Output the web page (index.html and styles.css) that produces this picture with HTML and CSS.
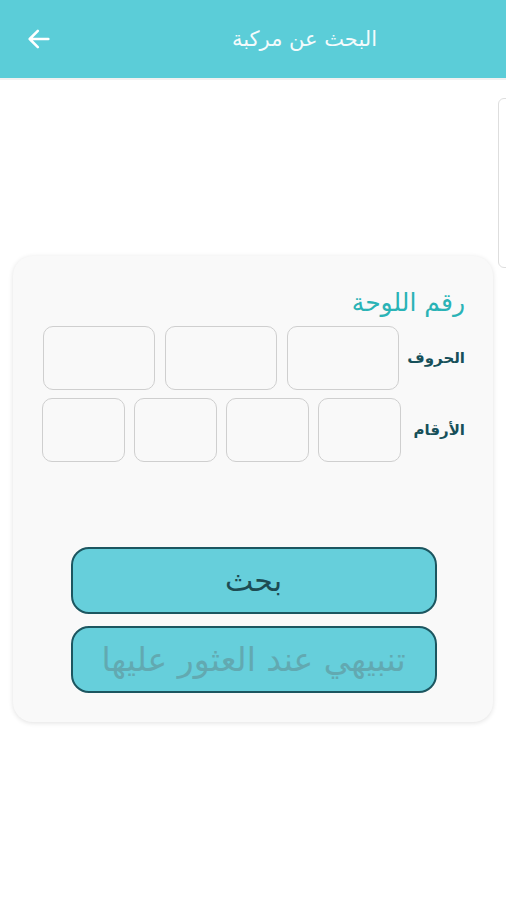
FILE: index.html
```html
<!DOCTYPE html>
<html lang="ar">
<head>
  <meta charset="utf-8" />
  <meta name="viewport" content="width=device-width, initial-scale=1.0">
  <title>البحث عن مركبة</title>
  <link rel="stylesheet" href="styles.css">
</head>
<body>
  <div class="toolbar">
    <button class="back-btn" aria-label="رجوع">
      <svg viewBox="0 0 24 24">
        <path d="M20 12H4M11 5l-7 7 7 7"/>
      </svg>
    </button>
    <div class="toolbar-title">البحث عن مركبة</div>
  </div>

  <div class="page">
    <div class="side-tab"></div>

    <div class="card">
      <div class="plate-title">رقم اللوحة</div>

      <div class="plate-row letters-row">
        <label class="row-label">الحروف</label>
        <div class="cells letters">
          <input class="cell" type="text" maxlength="1">
          <input class="cell" type="text" maxlength="1">
          <input class="cell" type="text" maxlength="1">
        </div>
      </div>

      <div class="plate-row numbers-row">
        <label class="row-label">الأرقام</label>
        <div class="cells numbers">
          <input class="cell" type="text" maxlength="1">
          <input class="cell" type="text" maxlength="1">
          <input class="cell" type="text" maxlength="1">
          <input class="cell" type="text" maxlength="1">
        </div>
      </div>

      <div class="actions">
        <button class="action-btn search-btn">بحث</button>
        <button class="action-btn notify-btn">تنبيهي عند العثور عليها</button>
      </div>
    </div>
  </div>
</body>
</html>
```

FILE: styles.css
```css
:root {
  --primary: #5bcdd8;
  --button: #66cfdb;
  --button-border: #1c5660;
  --title-color: #2ab3b6;
  --label-color: #17505a;
}

* {
  margin: 0;
  padding: 0;
  box-sizing: border-box;
  font-family: "DejaVu Sans", "Noto Sans", sans-serif;
}

body {
  background: white;
  min-height: 100vh;
  direction: rtl;
}

.toolbar {
  height: 80px;
  background: var(--primary);
  display: flex;
  align-items: center;
  direction: ltr;
  padding: 0 22px;
  border-bottom: 2px solid #f1f1f1;
}

.back-btn {
  width: 34px;
  height: 34px;
  background: none;
  border: none;
  display: flex;
  align-items: center;
  justify-content: center;
}

.back-btn svg {
  width: 28px;
  height: 28px;
  fill: none;
  stroke: white;
  stroke-width: 2.2;
  stroke-linecap: round;
  stroke-linejoin: round;
}

.toolbar-title {
  flex: 1;
  text-align: right;
  padding-right: 107px;
  color: #f4fbfc;
  font-size: 21px;
  direction: rtl;
}

.page {
  position: relative;
  padding: 176px 13px 0 13px;
}

.side-tab {
  position: absolute;
  top: 18px;
  left: 498px;
  width: 20px;
  height: 170px;
  border: 1px solid #dedede;
  border-radius: 6px;
  background: white;
}

.card {
  background: #f9f9f9;
  border-radius: 20px;
  box-shadow: 0 1px 5px rgba(0,0,0,0.12);
  padding: 30px 28px 28px 29px;
  width: 480px;
  min-height: 466px;
}

.plate-title {
  color: var(--title-color);
  font-size: 25px;
  line-height: 34px;
  margin-bottom: 6px;
}

.plate-row {
  display: flex;
  align-items: center;
  margin-bottom: 8px;
}

.letters-row {
  gap: 8px;
}

.numbers-row {
  gap: 13px;
}

.row-label {
  color: var(--label-color);
  font-size: 15px;
  font-weight: bold;
  white-space: nowrap;
}

.cells {
  display: flex;
}

.cell {
  height: 64px;
  border: 1.5px solid #cfcfcf;
  border-radius: 10px;
  background: #f9f9f9;
  outline: none;
  text-align: center;
  font-size: 22px;
}

.letters {
  gap: 10px;
}

.letters .cell {
  width: 112px;
}

.numbers {
  gap: 9px;
}

.numbers .cell {
  width: 83px;
}

.actions {
  display: flex;
  flex-direction: column;
  gap: 12px;
  align-items: center;
  margin-top: 85px;
}

.action-btn {
  width: 366px;
  height: 67px;
  background: var(--button);
  border: 2px solid var(--button-border);
  border-radius: 18px;
  cursor: pointer;
  font-size: 30px;
}

.search-btn {
  color: #1d4c53;
}

.notify-btn {
  color: #62a9b1;
  font-size: 33px;
}
```
